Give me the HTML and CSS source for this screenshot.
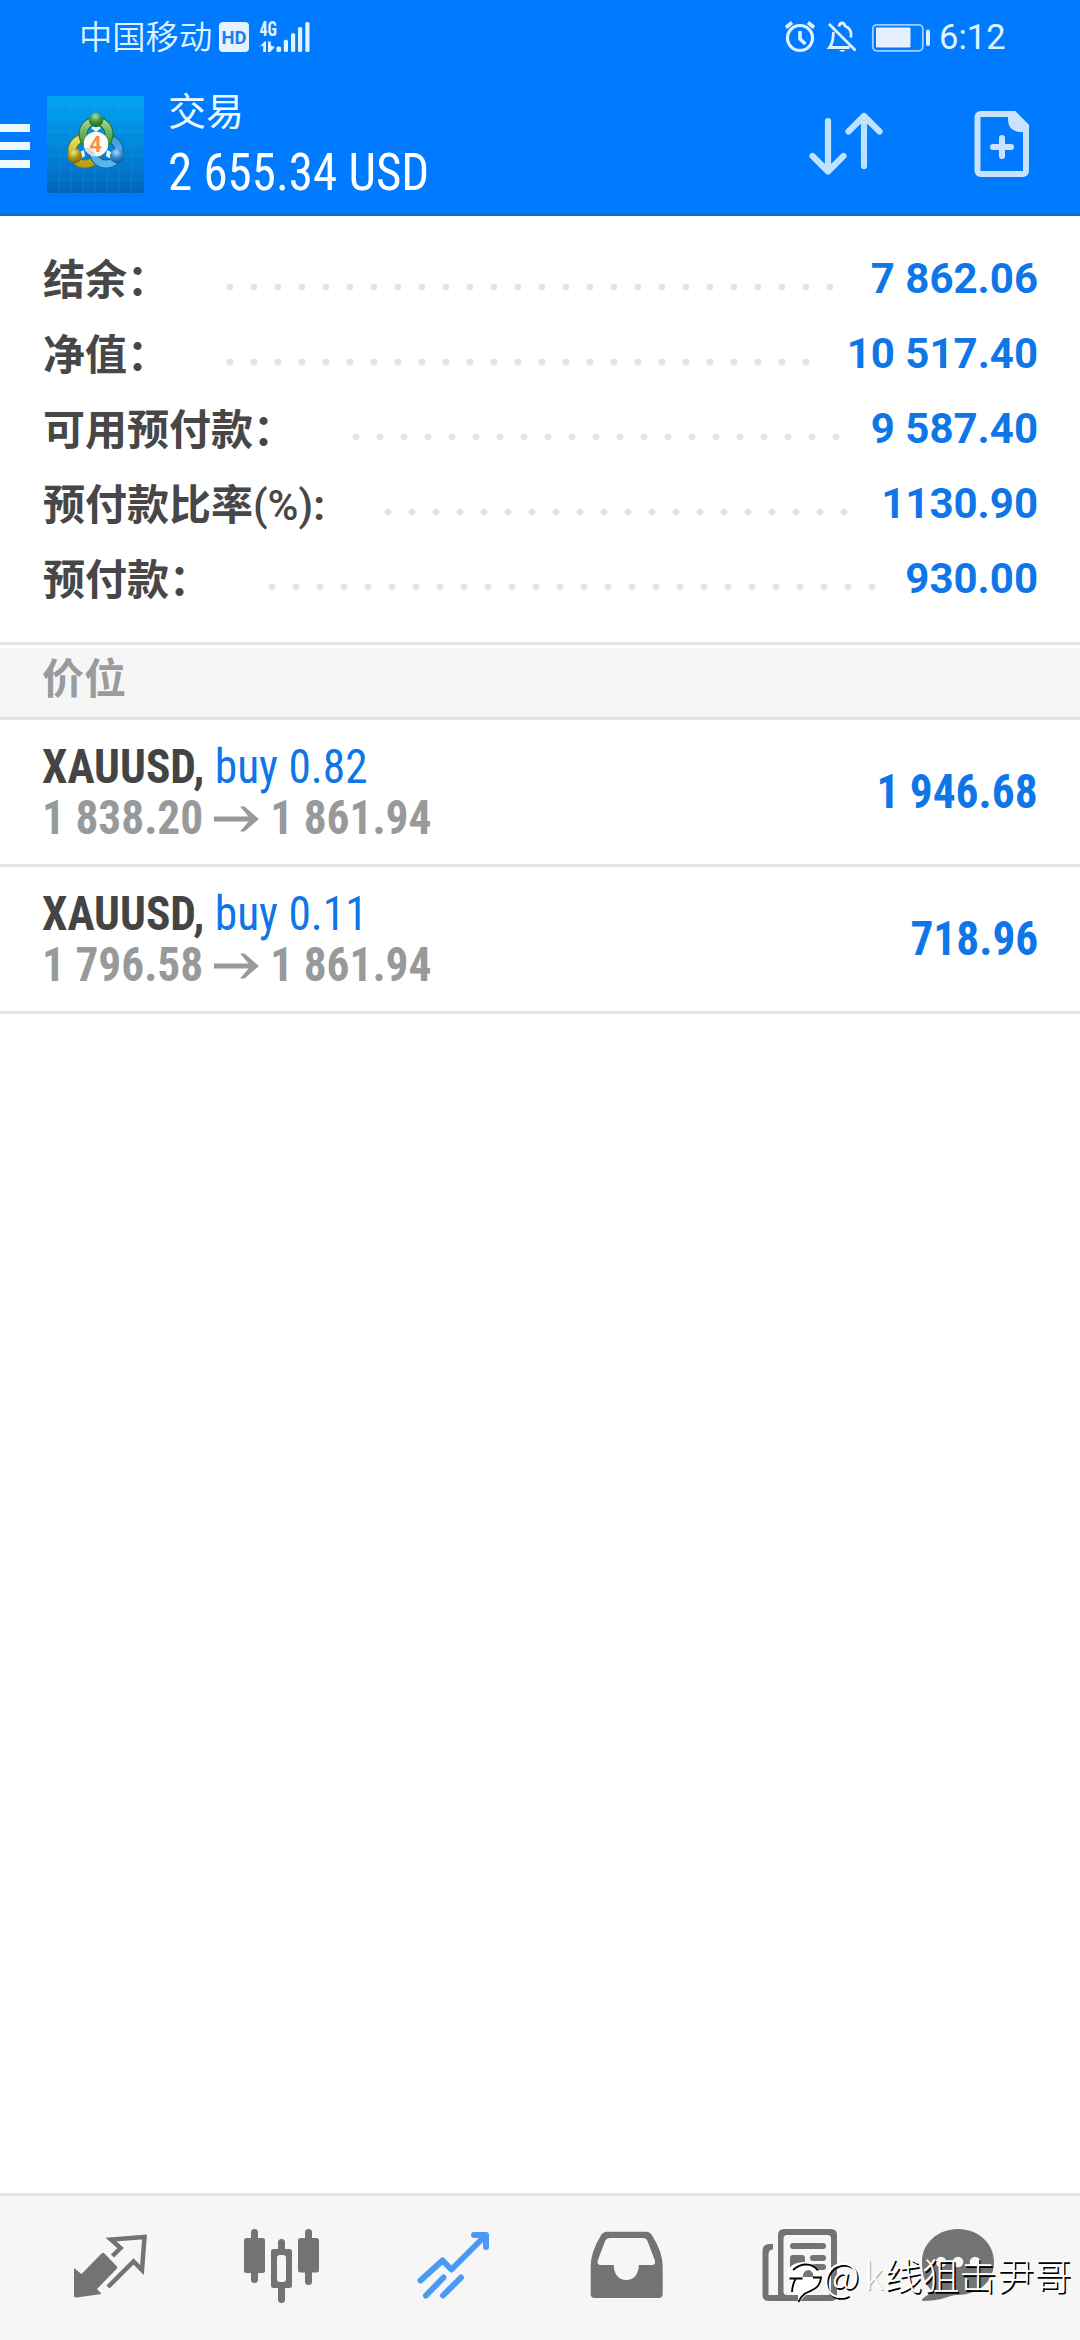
FILE: index.html
```
<!DOCTYPE html>
<html lang="zh-CN">
<head>
<meta charset="utf-8">
<meta name="viewport" content="width=device-width">
<title>交易</title>
<link rel="stylesheet" href="styles.css">
</head>
<body>
<div class="screen">
  <header class="top">
    <div class="status">
      <span class="carrier">中国移动</span>
      <svg class="status-left" width="92" height="36" viewBox="218 18 92 36" fill="#e3f3ff">
        <path d="M223 21h22a4 4 0 0 1 4 4v22a4 4 0 0 1-4 4h-22a4 4 0 0 1-4-4v-22a4 4 0 0 1 4-4z"/>
        <text class="hd" x="221.500" y="42.500" textLength="25" lengthAdjust="spacingAndGlyphs">HD</text>
        <text class="net" x="259.500" y="35" textLength="17.500" lengthAdjust="spacingAndGlyphs">4G</text>
        <path d="M259.500 46l5-5.500h1.500v10.500h-2.800v-6h-3.700zM268 40.500h2.800v4l4 1.500-4.500 5h-2.300z"/>
        <rect x="276.500" y="45.500" width="4.600" height="5.500" rx="1.500"/>
        <rect x="283.800" y="38.700" width="4.200" height="12.300" rx="1.500"/>
        <rect x="291" y="32.300" width="4.200" height="18.700" rx="1.500"/>
        <rect x="298" y="26" width="4.200" height="25" rx="1.500"/>
        <rect x="305.300" y="21" width="4.200" height="30" rx="1.500"/>
      </svg>
      <svg class="status-right" width="150" height="36" viewBox="782 18 150 36" fill="none" stroke="#dff2ff" stroke-width="3.200">
        <circle cx="799" cy="37" r="12.500"/>
        <path d="M799 30v8l5.500 5M785 26.500l6-5M813 26.500l-6-5" stroke-width="3.600"/>
        <path d="M828 23l26.500 26.500M838 25.500c.5-2.500 2-3.500 3-3.500s2.500 1 3 3c4 1.500 6 4.500 6 8v3.500M832.500 31c-.7 5 .3 10-4 15.500h20" stroke-width="2.800"/>
        <path d="M838 49h6.500q-3 3.500-6.500 0z" fill="#dff2ff" stroke="none"/>
        <rect x="871.800" y="23.800" width="50" height="26" rx="4" stroke-width="1.800" stroke="#9ed0ff"/>
        <rect x="875" y="26.500" width="34.500" height="20" rx="1" fill="#e6f0ff" stroke="none"/>
        <rect x="925" y="28.500" width="4" height="16.500" rx="2" fill="#dff2ff" stroke="none"/>
      </svg>
      <span class="clock">6:12</span>
    </div>
    <div class="bar">
      <div class="burger"><i></i><i></i><i></i></div>
      <svg class="logo" width="97" height="97" viewBox="0 0 97 97">
        <defs>
          <linearGradient id="bg" x1="0" y1="0" x2="0" y2="1"><stop offset="0" stop-color="#02a4f4"/><stop offset=".55" stop-color="#0384d8"/><stop offset="1" stop-color="#0265bd"/></linearGradient>
          <linearGradient id="g" x1="0" y1="0" x2="0" y2="1"><stop offset="0" stop-color="#9fd58b"/><stop offset="1" stop-color="#2c8c32"/></linearGradient>
          <linearGradient id="y" x1="0" y1="0" x2="0" y2="1"><stop offset="0" stop-color="#e9e25c"/><stop offset="1" stop-color="#b9a018"/></linearGradient>
          <linearGradient id="b" x1="0" y1="0" x2="0" y2="1"><stop offset="0" stop-color="#3d9ede"/><stop offset="1" stop-color="#55b8ee"/></linearGradient>
          <radialGradient id="gb" cx=".45" cy=".25" r=".8"><stop offset="0" stop-color="#a9dfa0"/><stop offset=".5" stop-color="#3f9440"/><stop offset="1" stop-color="#17611f"/></radialGradient>
          <radialGradient id="yb" cx=".4" cy=".25" r=".8"><stop offset="0" stop-color="#efe983"/><stop offset=".5" stop-color="#a89520"/><stop offset="1" stop-color="#6d6110"/></radialGradient>
          <radialGradient id="bb" cx=".45" cy=".25" r=".8"><stop offset="0" stop-color="#a6dcf8"/><stop offset=".5" stop-color="#3387c9"/><stop offset="1" stop-color="#0d4f90"/></radialGradient>
        </defs>
        <rect width="97" height="97" fill="url(#bg)"/>
        <path d="M12 0v97M24 0v97M36 0v97M48 0v97M60 0v97M72 0v97M84 0v97M0 12h97M0 24h97M0 36h97M0 48h97M0 60h97M0 72h97M0 84h97" stroke="#4bbcff" stroke-opacity=".13" fill="none"/>
        <circle cx="38" cy="55" r="13" fill="none" stroke="#77701a" stroke-width="9"/>
        <circle cx="38" cy="55" r="13" fill="none" stroke="url(#y)" stroke-width="7"/>
        <circle cx="59" cy="55" r="13" fill="none" stroke="#115a99" stroke-width="9"/>
        <circle cx="59" cy="55" r="13" fill="none" stroke="url(#b)" stroke-width="7"/>
        <circle cx="49" cy="38" r="13" fill="none" stroke="#20692a" stroke-width="9"/>
        <circle cx="49" cy="38" r="13" fill="none" stroke="url(#g)" stroke-width="7"/>
        <path d="M44 32l5-4 5 4-5 4zM31 57l6-3 1 6-5 3zM66 57l-6-3-1 6 5 3z" fill="#eef8f4"/>
        <circle cx="49" cy="24" r="7.200" fill="url(#gb)"/>
        <circle cx="28" cy="60" r="7.200" fill="url(#yb)"/>
        <circle cx="70" cy="60" r="7.200" fill="url(#bb)"/>
        <circle cx="49" cy="48" r="12.300" fill="#fbfaf8"/>
        <path d="M37.500 51.500q8 0 11.500 8.500a12 12 0 0 1-11.500-8.500z" fill="#d8d8d8"/>
        <text class="four" x="48.500" y="56" text-anchor="middle">4</text>
      </svg>
      <div class="titles">
        <h1 class="title">交易</h1>
        <div class="total">2 655.34 USD</div>
      </div>
      <div class="actions">
        <svg width="80" height="70" viewBox="806 110 80 70" fill="none" stroke="#bfe2ff" stroke-width="6.200" stroke-linecap="round" stroke-linejoin="round"><path d="M828 121v50M812.500 156l15.500 15.500 15.500-15.500M864 166v-50M848.500 131.500l15.500-15.500 15.500 15.500"/></svg>
        <svg width="56" height="70" viewBox="974 110 56 70"><path d="M980.500 114h33.500l12 12v45a3 3 0 0 1-3 3h-42.500a3 3 0 0 1-3-3v-54a3 3 0 0 1 3-3z" fill="none" stroke="#cbe2ff" stroke-width="6"/><path d="M1008 114h7l11.500 12v6h-8q-10.500-2-10.500-12z" fill="#cbe2ff"/><path d="M1002 138v18M993 147h18" stroke="#cbe2ff" stroke-width="6" stroke-linecap="round"/></svg>
      </div>
    </div>
  </header>

  <section class="summary">
    <div class="line"><span class="label">结余：</span><span class="dots" style="--dots:26"></span><span class="value">7 862.06</span></div>
    <div class="line"><span class="label">净值：</span><span class="dots" style="--dots:25"></span><span class="value">10 517.40</span></div>
    <div class="line"><span class="label">可用预付款：</span><span class="dots" style="--dots:21"></span><span class="value">9 587.40</span></div>
    <div class="line"><span class="label">预付款比率<span class="pct"><span class="unit">(%)</span>:</span></span><span class="dots" style="--dots:20"></span><span class="value">1130.90</span></div>
    <div class="line"><span class="label">预付款：</span><span class="dots" style="--dots:26"></span><span class="value">930.00</span></div>
  </section>

  <h2 class="section">价位</h2>

  <ul class="positions">
    <li class="position">
      <div class="info">
        <div class="deal"><b class="symbol">XAUUSD,</b><span class="side">buy 0.82</span></div>
        <div class="prices"><span>1 838.20</span><svg class="arrow" width="48" height="28" viewBox="0 0 46 28" preserveAspectRatio="none"><path d="M0 11.500h35l-8.500-10h4.500l14.500 12.500-14.500 12.500h-4.500l8.500-10h-35z"/></svg><span>1 861.94</span></div>
      </div>
      <div class="profit">1 946.68</div>
    </li>
    <li class="position">
      <div class="info">
        <div class="deal"><b class="symbol">XAUUSD,</b><span class="side">buy 0.11</span></div>
        <div class="prices"><span>1 796.58</span><svg class="arrow" width="48" height="28" viewBox="0 0 46 28" preserveAspectRatio="none"><path d="M0 11.500h35l-8.500-10h4.500l14.500 12.500-14.500 12.500h-4.500l8.500-10h-35z"/></svg><span>1 861.94</span></div>
      </div>
      <div class="profit">718.96</div>
    </li>
  </ul>

  <nav class="tabs">
    <a class="tab"><svg viewBox="60 2215 100 100"><path d="M74 2268l7.500 6 20-20.500q1.500-1.500 3 0l12 12.500q1.500 1.500 0 3l-19.500 20 4.500 5-25 3.500q-2.500.3-2.500-2z"/><path d="M112.500 2256l8-8-9.500-8.500 33.500-2.500-2.500 33-8.500-8.500-25.500 25.500" fill="none" stroke="#737373" stroke-width="4.500"/></svg></a>
    <a class="tab"><svg viewBox="232 2215 100 100"><rect x="244" y="2238" width="21" height="35" rx="2.500"/><rect x="251" y="2229" width="7" height="54" rx="3.500"/><rect x="298" y="2238" width="21" height="34.500" rx="2.500"/><rect x="305" y="2229" width="7" height="56" rx="3.500"/><rect x="278" y="2239" width="7" height="64" rx="3.500"/><rect x="271" y="2249" width="21" height="39" rx="2.500"/><rect x="277" y="2255" width="9" height="27" rx="3" fill="#f6f6f6"/></svg></a>
    <a class="tab active"><svg viewBox="404 2215 100 100"><path d="M420.500 2280.500l22-20 9 9 34-34M474 2235h12v12M426 2295.500l17.500-18M443 2295.500l18-18"/></svg></a>
    <a class="tab"><svg viewBox="576 2215 100 100"><path fill-rule="evenodd" d="M607 2231.700h39q4 0 6 3.500 10.700 17 10.700 31v27.800q0 4-4 4h-64q-4 0-4-4v-27.800q0-14 10.300-31 2-3.500 6-3.500zM609.500 2238q-3 0-4.200 2.500l-7.200 19q-2 5.500 3 5.500h12.700c0 9 5 15 12.500 15s12.500-6 12.500-15h12.700q5 0 3-5.500l-7.200-19q-1.200-2.500-4.200-2.500z"/></svg></a>
    <a class="tab"><svg viewBox="748 2215 100 100"><path d="M784 2229h47q6 0 6 6v60q0 6-6 6h-62q-6.500 0-6.500-6v-44q0-7 7-7h3.500v5.500q-4.500 0-4.500 5v40.500h9.500v-60q0-6 6-6z"/><rect x="783.500" y="2235" width="47.500" height="60" rx="3.500" fill="#f6f6f6"/><rect x="790" y="2243" width="36" height="6" rx="3"/><rect x="790" y="2255" width="15" height="16" rx="3"/><rect x="810" y="2255" width="16" height="6" rx="3"/><rect x="810" y="2264" width="16" height="6" rx="3"/></svg></a>
    <a class="tab"><svg viewBox="920 2215 100 100"><path d="M958 2229c20 0 36 14 36 33s-14 32-36 33c-10 0-13 5.500-34 6-2 0-3-1.500-.5-3 3-2 7-5 7.500-8-5.500-6-9-14-9-28 0-19 16-33 36-33z"/><circle cx="941" cy="2262" r="5.300" fill="#f6f6f6"/><circle cx="958" cy="2262" r="5.300" fill="#f6f6f6"/><circle cx="975" cy="2262" r="5.300" fill="#f6f6f6"/></svg></a>
  </nav>

  <div class="watermark">
    <svg width="38" height="44" viewBox="786 2260 38 44"><path d="M787 2272c2-6 9-10 17-10 10 0 16 6 16 16 0 9-6 15-14 17l-8 8v-8c-4-3-5-6-5-11z" fill="#fff"/><path d="M802.500 2277q1-7 6-7 5 1 5 7z" fill="#777"/><path d="M793 2270q6-5.500 13-5.500 8 0 12 6M789.500 2278.500h13M813 2277.500h8q-1 8-6 11-5 3-10 5-4 3-6.500 8.500M795.500 2279q-3 5-3.500 13" fill="none" stroke="#000" stroke-width="1.800"/></svg>
    <span class="at">@</span><span class="k">k</span><span class="name">线狙击尹哥</span>
  </div>
</div>
</body>
</html>
```
FILE: styles.css
```
* { box-sizing: border-box; margin: 0; padding: 0; }

body {
  background: #fff;
  font-family: Roboto, "Noto Sans CJK SC", sans-serif;
}

.screen {
  position: relative;
  display: flex;
  flex-direction: column;
  width: 1080px;
  height: 2340px;
  overflow: hidden;
}

svg { display: block; flex: none; }

/* header */
.top {
  height: 216px;
  background: #007aff;
  border-bottom: 3px solid #1a69c2;
  color: #eefaff;
}

.status {
  display: flex;
  align-items: center;
  height: 74px;
  padding-left: 79px;
}

.carrier { width: 139px; font-size: 33.300px; line-height: 40px; color: #e0f4ff; padding-top: 2px; font-weight: 350; }
.status-right { margin-left: 473px; }
.clock { margin-left: 6px; font-size: 34.500px; line-height: 40px; color: #e0f4ff; }
.hd { font: 700 18px Roboto, sans-serif; fill: #1a7df0; }
.net { font: 700 20px Roboto, sans-serif; font-stretch: 75%; }

.bar { display: flex; height: 139px; }
.burger { display: flex; flex-direction: column; gap: 10px; width: 47px; padding-top: 50px; }
.burger i { width: 30px; height: 8px; background: #eefaff; }
.logo { margin-top: 22px; }
.four { font: 700 22px Roboto, sans-serif; fill: #f2924a; }
.titles { width: 300px; padding: 16px 0 0 24px; }
.title { font-size: 38px; line-height: 44px; font-weight: 400; }
.total {
  margin-top: 15px;
  font-size: 51px;
  line-height: 48px;
  font-stretch: 75%;
  color: #fff;
  white-space: nowrap;
  transform: scaleX(.96);
  transform-origin: left;
}
.actions { display: flex; justify-content: space-between; width: 224px; margin-left: 362px; padding-top: 36px; }

/* account summary */
.summary { height: 426px; padding: 25.500px 42px 0; }
.line { display: flex; align-items: center; height: 75px; font-size: 42px; line-height: 50px; font-weight: 700; color: #474747; }
.label { padding-top: 3px; padding-left: 1px; white-space: nowrap; }
.pct { display: inline-block; width: 74.400px; }
.unit { font-stretch: 90%; font-weight: 500; }
.dots {
  width: calc(var(--dots) * 24px);
  height: 24px;
  margin: 16px auto 0 49px;
  background: radial-gradient(circle at 12px 12px, #e3e3e3 3.200px, transparent 3.800px) 0 0 / 24px 24px;
}
.value { color: #0f76e8; white-space: nowrap; }

.section {
  height: 78px;
  padding: 10px 42px 0;
  border-top: 3px solid #e3e3e3;
  border-bottom: 3px solid #e3e3e3;
  background: #f6f6f6;
  box-shadow: inset 0 3px #fff;
  color: #999b9c;
  font-size: 42px;
  line-height: 50px;
}

/* open positions */
.positions { flex: 1; list-style: none; }
.position {
  display: flex;
  justify-content: space-between;
  height: 147px;
  padding: 21px 42px 0;
  border-bottom: 3px solid #e3e3e3;
  font-size: 48px;
  line-height: 51px;
  font-stretch: 75%;
  white-space: nowrap;
}
.info { transform: scaleX(.945); transform-origin: left; }
.deal { display: flex; }
.symbol { color: #444; }
.side { margin-left: 11px; color: #0f76e8; }
.prices { display: flex; align-items: center; color: #98999a; font-weight: 700; }
.arrow { margin: 2px 12px 0 11px; fill: #98999a; }
.profit { margin-top: 25px; color: #0f76e8; font-weight: 700; transform: scaleX(.945); transform-origin: right; }

/* bottom tabs */
.tabs {
  display: flex;
  height: 147px;
  padding: 19px 0 0 24px;
  border-top: 3px solid #e3e3e3;
  background: #f6f6f6;
}
.tab { display: flex; flex: none; justify-content: center; width: 172px; }
.tab svg { width: 100px; height: 100px; fill: #737373; }
.tab.active svg { fill: none; stroke: #4a9af4; stroke-width: 6; stroke-linecap: round; stroke-linejoin: round; }

.watermark {
  position: absolute;
  left: 786px;
  top: 2260px;
  display: flex;
  color: #fff;
  font: 300 37.400px/44px "Noto Sans CJK SC", sans-serif;
  text-shadow: 1.500px 1.500px 0 #000;
  white-space: nowrap;
}
.watermark span { margin-top: -8px; }
.at { width: 38px; margin-left: -1px; font-size: 40px; }
.k { margin-left: 3px; text-shadow: 1px 1px 0 #aaa; }
.name { margin-left: 1px; }
```
